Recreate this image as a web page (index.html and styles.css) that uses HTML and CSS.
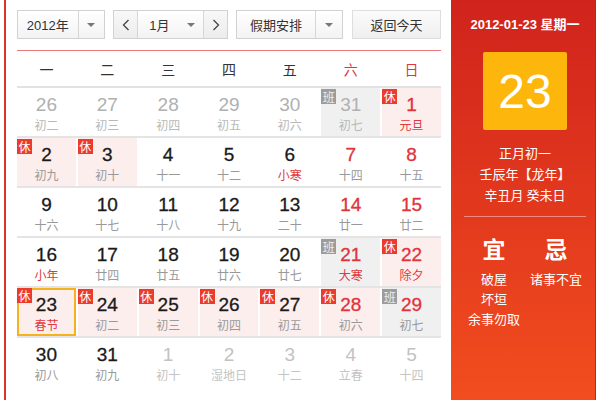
FILE: index.html
```html
<!DOCTYPE html>
<html lang="zh-CN">
<head>
<meta charset="utf-8">
<title>万年历</title>
<link rel="stylesheet" href="styles.css">
</head>
<body>
<div class="wrap">
  <div class="main">
    <div class="toolbar">
      <div class="select year"><span class="sel-text">2012年</span><span class="sel-arrow"><i class="tri"></i></span></div>
      <div class="month-group">
        <span class="nav prev"><svg width="8" height="12" viewBox="0 0 8 12"><polyline points="6.5,1 1.5,6 6.5,11" fill="none" stroke="#444" stroke-width="1.3"/></svg></span>
        <div class="select month"><span class="sel-text">1月</span><span class="sel-arrow plain"><i class="tri"></i></span></div>
        <span class="nav next"><svg width="8" height="12" viewBox="0 0 8 12"><polyline points="1.5,1 6.5,6 1.5,11" fill="none" stroke="#444" stroke-width="1.3"/></svg></span>
      </div>
      <div class="select holiday"><span class="sel-text">假期安排</span><span class="sel-arrow"><i class="tri"></i></span></div>
      <div class="today-btn">返回今天</div>
    </div>

    <div class="weekdays">
      <span>一</span><span>二</span><span>三</span><span>四</span><span>五</span><span class="we">六</span><span class="we">日</span>
    </div>

    <div class="grid">
      <div class="row">
        <div class="cell other"><b>26</b><em>初二</em></div>
        <div class="cell other"><b>27</b><em>初三</em></div>
        <div class="cell other"><b>28</b><em>初四</em></div>
        <div class="cell other"><b>29</b><em>初五</em></div>
        <div class="cell other"><b>30</b><em>初六</em></div>
        <div class="cell other work"><span class="badge ban">班</span><b>31</b><em>初七</em></div>
        <div class="cell rest red"><span class="badge xiu">休</span><b>1</b><em class="fest">元旦</em></div>
      </div>
      <div class="row">
        <div class="cell rest"><span class="badge xiu">休</span><b>2</b><em>初九</em></div>
        <div class="cell rest"><span class="badge xiu">休</span><b>3</b><em>初十</em></div>
        <div class="cell"><b>4</b><em>十一</em></div>
        <div class="cell"><b>5</b><em>十二</em></div>
        <div class="cell"><b>6</b><em class="fest">小寒</em></div>
        <div class="cell red"><b>7</b><em>十四</em></div>
        <div class="cell red"><b>8</b><em>十五</em></div>
      </div>
      <div class="row">
        <div class="cell"><b>9</b><em>十六</em></div>
        <div class="cell"><b>10</b><em>十七</em></div>
        <div class="cell"><b>11</b><em>十八</em></div>
        <div class="cell"><b>12</b><em>十九</em></div>
        <div class="cell"><b>13</b><em>二十</em></div>
        <div class="cell red"><b>14</b><em>廿一</em></div>
        <div class="cell red"><b>15</b><em>廿二</em></div>
      </div>
      <div class="row">
        <div class="cell"><b>16</b><em class="fest">小年</em></div>
        <div class="cell"><b>17</b><em>廿四</em></div>
        <div class="cell"><b>18</b><em>廿五</em></div>
        <div class="cell"><b>19</b><em>廿六</em></div>
        <div class="cell"><b>20</b><em>廿七</em></div>
        <div class="cell work red"><span class="badge ban">班</span><b>21</b><em class="fest">大寒</em></div>
        <div class="cell rest red"><span class="badge xiu">休</span><b>22</b><em class="fest">除夕</em></div>
      </div>
      <div class="row">
        <div class="cell rest today"><span class="badge xiu">休</span><b>23</b><em class="fest">春节</em></div>
        <div class="cell rest"><span class="badge xiu">休</span><b>24</b><em>初二</em></div>
        <div class="cell rest"><span class="badge xiu">休</span><b>25</b><em>初三</em></div>
        <div class="cell rest"><span class="badge xiu">休</span><b>26</b><em>初四</em></div>
        <div class="cell rest"><span class="badge xiu">休</span><b>27</b><em>初五</em></div>
        <div class="cell rest red"><span class="badge xiu">休</span><b>28</b><em>初六</em></div>
        <div class="cell work red"><span class="badge ban">班</span><b>29</b><em>初七</em></div>
      </div>
      <div class="row last">
        <div class="cell"><b>30</b><em>初八</em></div>
        <div class="cell"><b>31</b><em>初九</em></div>
        <div class="cell other next"><b>1</b><em>初十</em></div>
        <div class="cell other next"><b>2</b><em>湿地日</em></div>
        <div class="cell other next"><b>3</b><em>十二</em></div>
        <div class="cell other next"><b>4</b><em>立春</em></div>
        <div class="cell other next"><b>5</b><em>十四</em></div>
      </div>
    </div>
  </div>

  <div class="side">
    <div class="side-date">2012-01-23 星期一</div>
    <div class="big-day">23</div>
    <div class="lunar">
      <div>正月初一</div>
      <div>壬辰年【龙年】</div>
      <div>辛丑月 癸未日</div>
    </div>
    <div class="sep"></div>
    <div class="yiji">
      <div class="col">
        <div class="head">宜</div>
        <div>破屋</div>
        <div>坏垣</div>
        <div>余事勿取</div>
      </div>
      <div class="col">
        <div class="head">忌</div>
        <div>诸事不宜</div>
      </div>
    </div>
  </div>
</div>
</body>
</html>
```

FILE: styles.css
```css
html, body {
  margin: 0;
  padding: 0;
  background: #fff;
}
body {
  font-family: "Liberation Sans", Arial, "Noto Sans CJK SC", sans-serif;
  color: #333;
  width: 600px;
  height: 400px;
  overflow: hidden;
}
.wrap {
  display: flex;
  padding-left: 4px;
  height: 400px;
}
.main {
  width: 424px;
  border-left: 2px solid #d9342c;
  padding: 10px 10px 0 11px;
  flex: none;
}

/* toolbar */
.toolbar {
  display: flex;
  height: 29px;
  gap: 8px;
  font-size: 13px;
}
.select {
  display: flex;
  height: 27px;
  border: 1px solid #d2d2d2;
  background: linear-gradient(#ffffff, #f3f3f3);
  box-sizing: content-box;
}
.sel-text {
  display: flex;
  align-items: center;
  justify-content: center;
  color: #333;
}
.sel-arrow {
  display: flex;
  align-items: center;
  justify-content: center;
  border-left: 1px solid #d6d6d6;
  width: 26px;
}
.sel-arrow.plain { border-left: none; }
.tri {
  width: 0;
  height: 0;
  border-left: 4px solid transparent;
  border-right: 4px solid transparent;
  border-top: 4px solid #777;
}
.year { width: 86px; }
.year .sel-text { width: 61px; }
.month-group {
  display: flex;
  height: 27px;
  border: 1px solid #d2d2d2;
  width: 113px;
}
.month-group .select {
  border: none;
  border-left: 1px solid #d6d6d6;
  border-right: 1px solid #d6d6d6;
  height: 27px;
  width: 65px;
}
.month .sel-text { width: 41px; padding-left: 2px; }
.nav {
  display: flex;
  align-items: center;
  justify-content: center;
  width: 23px;
  background: linear-gradient(#f8f8f8, #ececec);
}
.holiday { width: 105px; }
.holiday .sel-text { width: 78px; }
.today-btn {
  width: 88px;
  height: 27px;
  margin-left: 1px;
  border: 1px solid #dedede;
  background: linear-gradient(#fbfbfb, #efefef);
  display: flex;
  align-items: center;
  justify-content: center;
  color: #333;
}

/* weekday header */
.weekdays {
  margin-top: 11px;
  border-top: 1px solid #e97a7a;
  border-bottom: 2px solid #e2e2e2;
  height: 35px;
  display: grid;
  grid-template-columns: repeat(7, 1fr);
  column-gap: 2px;
  align-items: center;
  font-size: 14px;
  font-family: "Noto Sans CJK SC", sans-serif;
}
.weekdays span {
  text-align: center;
  color: #333;
}
.weekdays .we { color: #e0353a; }

/* grid */
.row {
  display: grid;
  grid-template-columns: repeat(7, 1fr);
  column-gap: 2px;
  height: 48px;
  border-bottom: 2px solid #e4e4e4;
}
.row.last { border-bottom: none; }
.cell {
  position: relative;
  display: flex;
  flex-direction: column;
  align-items: center;
  padding-top: 6px;
  box-sizing: border-box;
}
.cell b {
  font-family: "Liberation Sans", Arial, sans-serif;
  font-weight: normal;
  font-size: 19px;
  line-height: 22px;
  color: #1a1a1a;
  -webkit-text-stroke: 0.3px #1a1a1a;
}
.cell em {
  font-style: normal;
  font-family: "Noto Sans CJK SC", sans-serif;
  font-size: 12px;
  line-height: 18px;
  color: #999;
}
.cell.red b { color: #e0333a; -webkit-text-stroke-color: #e0333a; }
.cell em.fest { color: #e0383c; }
.cell.other b { color: #b0b0b0; -webkit-text-stroke: 0; }
.cell.other em { color: #b8b8b8; }
.cell.other.next b { color: #c2c2c2; }
.cell.other.next em { color: #c4c4c4; }
.cell.rest { background: #fdeeee; }
.cell.work { background: #f0f0f0; }
.cell.today { box-shadow: inset 0 0 0 2px #f4b21c; }

.badge {
  position: absolute;
  left: 0;
  top: 1px;
  width: 15px;
  height: 15px;
  font-size: 12px;
  line-height: 15px;
  text-align: center;
  color: #fff;
  font-family: "Noto Sans CJK SC", sans-serif;
}
.badge.xiu { background: #ec3a2c; }
.badge.ban { background: #9c9c9c; color: #eee; }
.cell.today .badge { top: 0; }

/* side panel */
.side {
  flex: none;
  width: 140px;
  padding-left: 4px;
  border-right: 1px solid #b8281c;
  background: linear-gradient(#d0231c, #f24d1f);
  color: #fff;
  display: flex;
  flex-direction: column;
  align-items: center;
  font-family: "Liberation Sans", Arial, "Noto Sans CJK SC", sans-serif;
}
.side-date {
  margin-top: 15px;
  line-height: 20px;
  font-size: 13px;
  font-weight: bold;
}
.big-day {
  margin-top: 17px;
  width: 84px;
  height: 78px;
  background: #fcb60c;
  border-radius: 2px;
  display: flex;
  align-items: center;
  justify-content: center;
  font-size: 48px;
  color: #fff;
}
.lunar {
  margin-top: 12px;
  text-align: center;
  font-size: 13px;
  line-height: 21px;
  font-family: "Noto Sans CJK SC", sans-serif;
}
.sep {
  margin-top: 11px;
  width: 122px;
  height: 1px;
  background: #f08a80;
}
.yiji {
  margin-top: 16px;
  display: flex;
  width: 124px;
  font-family: "Noto Sans CJK SC", sans-serif;
  font-size: 13px;
  line-height: 20px;
}
.yiji .col {
  width: 62px;
  text-align: center;
}
.yiji .head {
  font-size: 23px;
  font-weight: bold;
  line-height: 30px;
  margin-bottom: 6px;
}
```
